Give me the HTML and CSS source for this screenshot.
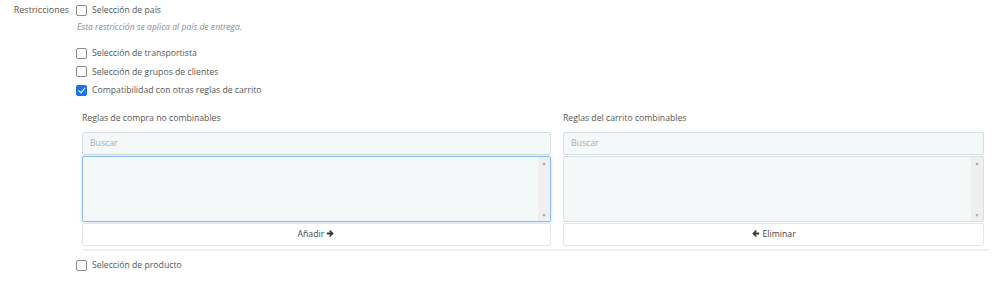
FILE: index.html
```html
<!DOCTYPE html>
<html lang="es">

<head>
    <meta charset="UTF-8">
    <meta name="viewport" content="width=device-width, initial-scale=1.0">
    <title>Restricciones</title>
    <link rel="stylesheet" href="styles.css">
</head>

<body>
    <div class="grupo">
        <div class="etiqueta">Restricciones</div>
        <div class="opciones">
            <label class="casilla primera"><span class="caja"></span>Selección de país</label>
            <p class="ayuda">Esta restricción se aplica al país de entrega.</p>
            <label class="casilla"><span class="caja"></span>Selección de transportista</label>
            <label class="casilla"><span class="caja"></span>Selección de grupos de clientes</label>
            <label class="casilla"><span class="caja marcada"></span>Compatibilidad con otras reglas de carrito</label>

            <div class="reglas">
                <div class="columna">
                    <div class="titulo">Reglas de compra no combinables</div>
                    <div class="buscar">Buscar</div>
                    <div class="lista enfocada">
                        <div class="barra"><span>&#9650;</span><span>&#9660;</span></div>
                    </div>
                    <div class="boton">Añadir
                        <svg class="flecha" viewBox="0 0 10 10"><path d="M1 4h4.2L3.4 2.2 4.6 1 8.6 5 4.6 9 3.4 7.8 5.2 6H1z"/></svg>
                    </div>
                </div>
                <div class="columna">
                    <div class="titulo">Reglas del carrito combinables</div>
                    <div class="buscar">Buscar</div>
                    <div class="lista">
                        <div class="barra"><span>&#9650;</span><span>&#9660;</span></div>
                    </div>
                    <div class="boton">
                        <svg class="flecha" viewBox="0 0 10 10"><path d="M9 4H4.8L6.6 2.2 5.4 1 1.4 5 5.4 9 6.6 7.8 4.8 6H9z"/></svg>
                        Eliminar
                    </div>
                </div>
            </div>

            <label class="casilla producto"><span class="caja"></span>Selección de producto</label>
        </div>
    </div>
</body>

</html>
```

FILE: styles.css
```css
body {
    margin: 0;
    background-color: #fff;
    font-family: "Open Sans", "Noto Sans", sans-serif;
    font-size: 8.7px;
    color: #555;
}

.grupo {
    display: flex;
    padding-top: 3px;
}

.etiqueta {
    width: 69px;
    text-align: right;
    line-height: 14px;
    padding-right: 7px;
    font-size: 9px;
}

.opciones {
    width: 914px;
}

.casilla {
    display: flex;
    align-items: center;
    gap: 5px;
    height: 14px;
    line-height: 14px;
    margin-bottom: 4.6px;
}

.primera {
    margin-bottom: 3px;
}

.caja {
    width: 9px;
    height: 9px;
    border: 1px solid #8a8a8a;
    border-radius: 2px;
    background-color: #fff;
    position: relative;
}

.marcada {
    border-color: #1a73e8;
    background-color: #1a73e8;
}

.marcada::after {
    content: "";
    position: absolute;
    left: 2.5px;
    top: 0.5px;
    width: 3px;
    height: 5.5px;
    border: solid #fff;
    border-width: 0 1.5px 1.5px 0;
    transform: rotate(40deg);
}

.ayuda {
    margin: 0 0 12px 1px;
    font-style: italic;
    font-size: 8.6px;
    color: #8d8d8d;
    line-height: 14px;
}

.reglas {
    display: grid;
    grid-template-columns: 469px 421px;
    column-gap: 12px;
    margin: 14px 0 0 6px;
    padding-bottom: 3px;
    border-bottom: 2px solid #eef0f1;
    width: 908px;
}

.titulo {
    line-height: 14px;
    margin-bottom: 7px;
}

.buscar {
    height: 21px;
    line-height: 21px;
    padding-left: 7px;
    background-color: #f5f8f9;
    border: 1px solid #d6e0e3;
    border-radius: 2px;
    color: #a5acae;
}

.lista {
    height: 64px;
    margin-top: 1px;
    background-color: #f5f8f9;
    border: 1px solid #d6e0e3;
    border-radius: 2px;
    display: flex;
    justify-content: flex-end;
}

.enfocada {
    border-color: #8bbcea;
    box-shadow: 0 0 3px rgba(100, 160, 230, 0.45);
}

.barra {
    width: 12px;
    background-color: #efefef;
    display: flex;
    flex-direction: column;
    justify-content: space-between;
    align-items: center;
    padding: 3px 0;
    font-size: 5px;
    color: #a0a0a0;
}

.boton {
    height: 21px;
    line-height: 21px;
    margin-top: 1px;
    text-align: center;
    border: 1px solid #e6e6e6;
    border-radius: 2px;
    background-color: #fff;
    color: #444;
}

.flecha {
    width: 9px;
    height: 9px;
    fill: #333;
    vertical-align: -1px;
}

.producto {
    margin-top: 7px;
}
```
